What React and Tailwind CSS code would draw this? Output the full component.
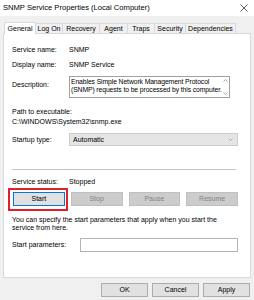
import React from 'react';

const tabs = [
  ['General', 32],
  ['Log On', 27],
  ['Recovery', 37],
  ['Agent', 28],
  ['Traps', 27],
  ['Security', 31],
  ['Dependencies', 50],
];

function Row({ label, children, className = '' }) {
  return (
    <div className={`flex items-center h-[10px] ${className}`}>
      <span className="w-[57px] shrink-0">{label}</span>
      {children}
    </div>
  );
}

function WinButton({ children, disabled, focused }) {
  let cls = 'border-[#adadad] bg-[#e1e1e1] text-black';
  if (disabled) cls = 'border-[#bfbfbf] bg-[#cccccc] text-[#838383]';
  if (focused) cls = 'border-[#0078d7] bg-[#e1e1e1] text-black';
  return (
    <div className={`h-[14px] border flex items-center justify-center ${cls}`}>
      {children}
    </div>
  );
}

export default function App() {
  return (
    <div
      className="w-[254px] h-[300px] bg-[#f0f0f0] flex flex-col text-[7px] leading-[8px] text-black overflow-hidden"
      style={{ fontFamily: '"Liberation Sans", Arial, sans-serif' }}
    >
      {/* title bar */}
      <div className="h-[16px] bg-white flex items-center justify-between pl-[3px] pr-[6px] shrink-0">
        <span className="text-[7.6px]">SNMP Service Properties (Local Computer)</span>
        <svg width="8" height="8" viewBox="0 0 8 8" className="mt-[-1px]">
          <path d="M0.5 0.5 L7.5 7.5 M7.5 0.5 L0.5 7.5" stroke="#333" strokeWidth="0.8" />
        </svg>
      </div>

      {/* tabs */}
      <div className="flex items-end ml-[4px] mt-[6px] h-[11px] relative z-10">
        {tabs.map(([t, w], i) =>
          i === 0 ? (
            <div
              key={t}
              style={{ width: w }}
              className="h-[12px] bg-white border border-b-0 border-[#d9d9d9] flex items-center justify-center mb-[-1px] shrink-0"
            >
              {t}
            </div>
          ) : (
            <div
              key={t}
              style={{ width: w }}
              className="h-[10px] border border-l-0 border-b-0 border-[#d9d9d9] bg-[#f0f0f0] flex items-center justify-center shrink-0"
            >
              {t}
            </div>
          )
        )}
      </div>

      {/* panel */}
      <div className="mx-[3px] w-[248px] h-[245px] bg-white border border-[#d9d9d9] pl-[8px] flex flex-col shrink-0">
        <Row label="Service name:" className="mt-[11px]">
          <span>SNMP</span>
        </Row>
        <Row label="Display name:" className="mt-[5px]">
          <span>SNMP Service</span>
        </Row>

        <div className="flex mt-[6px] h-[22px]">
          <span className="w-[57px] shrink-0 pt-[5px]">Description:</span>
          <div className="w-[161px] h-[22px] border border-[#a0a0a0] flex">
            <div className="flex-1 pl-[1px] pt-[1px] leading-[8px] text-[6.8px] tracking-[-0.1px]">
              Enables Simple Network Management Protocol (SNMP) requests to be processed by this computer.
            </div>
            <div className="w-[7px] flex flex-col items-center justify-between py-[2px]">
              <svg width="5" height="3" viewBox="0 0 5 3">
                <path d="M0.5 2.5 L2.5 0.5 L4.5 2.5" stroke="#888" strokeWidth="0.7" fill="none" />
              </svg>
              <svg width="5" height="3" viewBox="0 0 5 3">
                <path d="M0.5 0.5 L2.5 2.5 L4.5 0.5" stroke="#888" strokeWidth="0.7" fill="none" />
              </svg>
            </div>
          </div>
        </div>

        <div className="mt-[9px] h-[10px] flex items-center">Path to executable:</div>
        <div className="h-[10px] flex items-center">C:\WINDOWS\System32\snmp.exe</div>

        <div className="flex items-center mt-[6px] h-[13px]">
          <span className="w-[57px] shrink-0">Startup type:</span>
          <div className="w-[169px] h-[13px] bg-[#e5e5e5] border border-[#cccccc] flex items-center justify-between pl-[3px] pr-[4px]">
            <span>Automatic</span>
            <svg width="5" height="3" viewBox="0 0 5 3">
              <path d="M0.5 0.5 L2.5 2.5 L4.5 0.5" stroke="#999" strokeWidth="0.7" fill="none" />
            </svg>
          </div>
        </div>

        <div className="mt-[23px] h-px w-[224px] bg-[#c4c4c4]" />

        <Row label="Service status:" className="mt-[7px]">
          <span>Stopped</span>
        </Row>

        <div className="grid grid-cols-4 gap-[6px] w-[225px] mt-[5px] ml-[1px]">
          <div className="relative">
            <WinButton focused>Start</WinButton>
            <div className="absolute left-[-5px] top-[-4px] w-[60px] h-[23px] border-2 border-[#e0202a] pointer-events-none" />
          </div>
          <WinButton disabled>Stop</WinButton>
          <WinButton disabled>Pause</WinButton>
          <WinButton disabled>Resume</WinButton>
        </div>

        <div className="mt-[10px] w-[228px] leading-[8px]">
          You can specify the start parameters that apply when you start the service from here.
        </div>

        <div className="flex items-center mt-[6px] h-[14px]">
          <span className="w-[68px] shrink-0">Start parameters:</span>
          <div className="w-[158px] h-[14px] border border-[#b4b4b4] bg-white" />
        </div>
      </div>

      {/* bottom buttons */}
      <div className="flex justify-end gap-[4px] pr-[4px] mt-[5px]">
        <div className="w-[47px]"><WinButton>OK</WinButton></div>
        <div className="w-[47px]"><WinButton>Cancel</WinButton></div>
        <div className="w-[47px]"><WinButton>Apply</WinButton></div>
      </div>
    </div>
  );
}
